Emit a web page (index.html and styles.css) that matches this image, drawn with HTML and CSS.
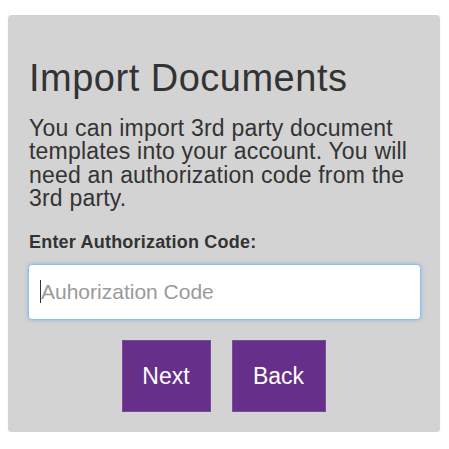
FILE: index.html
```html
<!DOCTYPE html>
<html>
<head>
<meta charset="utf-8">
<link rel="stylesheet" href="styles.css">
</head>
<body>
<div class="card">
  <h1 class="title">Import Documents</h1>
  <p class="desc">You can import 3rd party document templates into your account. You will need an authorization code from the 3rd party.</p>
  <label class="label" for="code">Enter Authorization Code:</label>
  <div class="field">
    <input id="code" class="input" type="text" placeholder="Auhorization Code">
    <span class="caret"></span>
  </div>
  <div class="actions">
    <button class="btn btn-next">Next</button>
    <button class="btn btn-back">Back</button>
  </div>
</div>
</body>
</html>
```
FILE: styles.css
```css
* { box-sizing: border-box; }
html, body { margin: 0; padding: 0; background: #fff; }
body {
  font-family: "Liberation Sans", Arial, sans-serif;
  color: #333;
  padding: 15px 9px 0 8px;
}
.card {
  width: 432px;
  height: 417px;
  background: #d3d3d3;
  border-radius: 4px;
  box-shadow: 0 1px 2px rgba(0,0,0,0.08);
  padding: 43px 20px 20px 20px;
  display: flex;
  flex-direction: column;
}
.title {
  margin: 0;
  font-size: 38px;
  line-height: 40px;
  font-weight: normal;
  letter-spacing: 0.5px;
  color: #333;
  padding-left: 1px;
}
.desc {
  margin: 19px 0 0 0;
  font-size: 23px;
  line-height: 23.3px;
  letter-spacing: 0.2px;
  color: #333;
  padding-left: 1px;
}
.label {
  display: block;
  margin-top: 22px;
  font-size: 18px;
  line-height: 20px;
  font-weight: bold;
  letter-spacing: 0.2px;
  color: #333;
  padding-left: 1px;
}
.field {
  position: relative;
  margin-top: 12px;
}
.input {
  display: block;
  width: 393px;
  height: 56px;
  border: 1px solid #8fbfee;
  border-radius: 4px;
  box-shadow: 0 0 4px rgba(102,175,233,0.7);
  background: #fff;
  padding: 0 12px;
  font-family: "Liberation Sans", Arial, sans-serif;
  font-size: 21px;
  color: #333;
  outline: none;
}
.input::placeholder { color: #9a9a9a; }
.caret {
  position: absolute;
  left: 12px;
  top: 16px;
  width: 1px;
  height: 23px;
  background: #333;
}
.actions {
  margin-top: 20px;
  display: flex;
  justify-content: center;
  gap: 21px;
  padding-right: 1px;
}
.btn {
  height: 72px;
  border: 1px solid #7a4a9c;
  background: #66308a;
  color: #fff;
  font-family: "Liberation Sans", Arial, sans-serif;
  font-size: 23px;
  padding: 0;
  border-radius: 0;
}
.btn-next { width: 89px; }
.btn-back { width: 94px; }
```
